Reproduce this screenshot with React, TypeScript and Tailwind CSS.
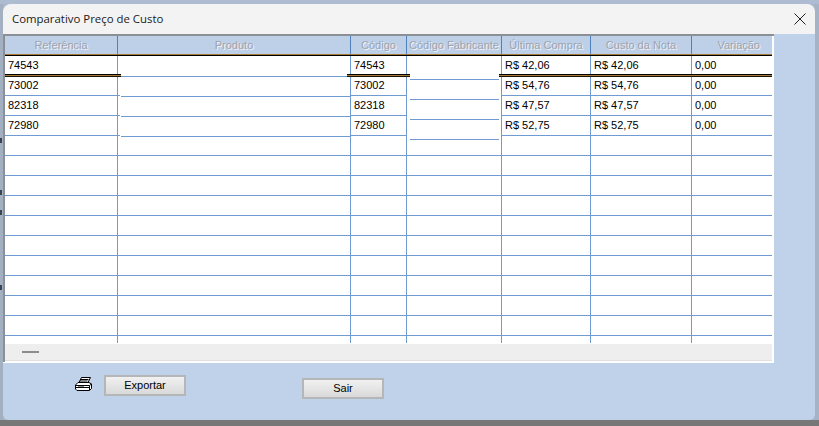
const font = "font-['Liberation_Sans',Arial,sans-serif]";

const rows = [
  { ref: "74543", cod: "74543", ult: "R$ 42,06", cus: "R$ 42,06", vari: "0,00" },
  { ref: "73002", cod: "73002", ult: "R$ 54,76", cus: "R$ 54,76", vari: "0,00" },
  { ref: "82318", cod: "82318", ult: "R$ 47,57", cus: "R$ 47,57", vari: "0,00" },
  { ref: "72980", cod: "72980", ult: "R$ 52,75", cus: "R$ 52,75", vari: "0,00" },
];

const emptyRows = Array.from({ length: 9 }, (_, i) => i);

function HeaderCell({ title, className }: { title: string; className: string }) {
  return (
    <div
      className={`h-[18px] shrink-0 flex items-center border-r border-[#4f82bd] text-[11px] text-[#9da3ad] [text-shadow:1px_1px_0_#eef3fa] ${className}`}
    >
      {title}
    </div>
  );
}

function Bar({ className }: { className: string }) {
  return (
    <div className={`relative z-10 h-[3px] shrink-0 flex flex-col ${className}`}>
      <div className="h-px bg-black" />
      <div className="h-px bg-[#a67a35]" />
      <div className="h-px bg-[#1a1408]" />
    </div>
  );
}

function TextCell({ text, h, className = "" }: { text: string; h: string; className?: string }) {
  return (
    <div className={`shrink-0 flex items-center pl-[3px] border-b border-[#6f9bd2] text-[11px] text-black ${h} ${className}`}>
      {text}
    </div>
  );
}

function Line({ h, className = "" }: { h: string; className?: string }) {
  return <div className={`shrink-0 border-b border-[#6f9bd2] ${h} ${className}`} />;
}

function TextColumn({
  width,
  values,
  barClass,
  cellClass = "",
  last = false,
}: {
  width: string;
  values: string[];
  barClass: string;
  cellClass?: string;
  last?: boolean;
}) {
  return (
    <div className={`flex flex-col shrink-0 ${last ? "" : "border-r border-[#6f9bd2]"} ${width}`}>
      <div className="h-[18px] shrink-0 flex items-center pl-[3px] text-[11px] text-black">{values[0]}</div>
      <Bar className={barClass} />
      <TextCell text={values[1]} h="h-[19px]" className={`pb-[2px] ${cellClass}`} />
      <TextCell text={values[2]} h="h-[20px]" className={cellClass} />
      <TextCell text={values[3]} h="h-[20px]" className={cellClass} />
      {emptyRows.concat([9]).map((i) => (
        <Line key={i} h="h-[20px]" />
      ))}
    </div>
  );
}

function Speck({ className }: { className: string }) {
  return <div className={`h-[5px] w-[2px] bg-[#3c4450] ${className}`} />;
}

export default function App() {
  return (
    <div className={`w-[819px] h-[426px] overflow-hidden flex flex-col bg-[#a9b7cb] ${font}`}>
      <div className="h-1 shrink-0 bg-[#aebcd1]" />
      <div className="flex flex-1 min-h-0">
        <div className="w-[3px] shrink-0 flex flex-col bg-[#a3b0c2]">
          <Speck className="mt-[134px]" />
          <Speck className="mt-[47px]" />
          <Speck className="mt-[15px]" />
          <Speck className="mt-[70px]" />
        </div>
        <div className="w-[812px] h-[416px] shrink-0 flex flex-col rounded-t-lg rounded-b-md overflow-hidden bg-[#c0d2e9]">
          <div className="h-[30px] shrink-0 flex items-center justify-between bg-[#f3f3f3] pl-[9px] pr-[9px]">
            <span className="font-['Open_Sans',sans-serif] text-[11.4px] text-[#1a1a1a]">Comparativo Preço de Custo</span>
            <svg width="12" height="12" viewBox="0 0 12 12" className="text-[#222]">
              <path d="M0.5 0.5 L11.5 11.5 M11.5 0.5 L0.5 11.5" stroke="currentColor" strokeWidth="1" fill="none" />
            </svg>
          </div>
          <div className="w-[771px] h-[328px] shrink-0 flex flex-col border-t-2 border-l-2 border-[#8b8f96] bg-white">
            <div className="flex h-[18px] shrink-0 w-[767px] bg-[#bed0e8]">
              <HeaderCell title="Referência" className="w-[113px] justify-center" />
              <HeaderCell title="Produto" className="w-[233px] justify-center" />
              <HeaderCell title="Código" className="w-[56px] justify-center" />
              <HeaderCell title="Código Fabricante" className="w-[95px] justify-center" />
              <HeaderCell title="Última Compra" className="w-[89px] justify-center" />
              <HeaderCell title="Custo da Nota" className="w-[101px] justify-center" />
              <div className="flex-1 h-[18px] flex items-center justify-end pr-3 text-[11px] text-[#9da3ad] [text-shadow:1px_1px_0_#eef3fa]">
                Variação
              </div>
            </div>
            <div className="w-[767px] shrink-0">
              <div className="h-px bg-[#a67a35]" />
              <div className="h-px bg-black" />
            </div>
            <div className="flex h-[287px] w-[767px] shrink-0">
              <TextColumn
                width="w-[113px]"
                values={rows.map((r) => r.ref)}
                barClass="-mr-[4px]"
                cellClass="-mr-[3px]"
              />
              <div className="flex flex-col shrink-0 w-[233px] border-r border-[#6f9bd2]">
                <Line h="h-[21px]" className="ml-[3px]" />
                <Line h="h-[20px]" className="ml-[3px]" />
                <Line h="h-[20px]" className="ml-[3px]" />
                <Line h="h-[20px]" className="ml-[3px]" />
                {emptyRows.concat([9]).map((i) => (
                  <Line key={i} h={i === 0 ? "h-[19px]" : "h-[20px]"} />
                ))}
              </div>
              <TextColumn width="w-[56px]" values={rows.map((r) => r.cod)} barClass="-mx-[4px]" />
              <div className="flex flex-col shrink-0 w-[95px] border-r border-[#6f9bd2]">
                <Line h="h-[24px]" className="ml-[3px] mr-[2px]" />
                <Line h="h-[20px]" className="ml-[3px] mr-[2px]" />
                <Line h="h-[20px]" className="ml-[3px] mr-[2px]" />
                <Line h="h-[20px]" className="ml-[3px] mr-[2px]" />
                {emptyRows.concat([9]).map((i) => (
                  <Line key={i} h={i === 0 ? "h-[16px]" : "h-[20px]"} />
                ))}
              </div>
              <TextColumn width="w-[89px]" values={rows.map((r) => r.ult)} barClass="-ml-[3px] -mr-px" />
              <TextColumn width="w-[101px]" values={rows.map((r) => r.cus)} barClass="-mr-px" />
              <TextColumn width="w-[80px]" values={rows.map((r) => r.vari)} barClass="" last />
            </div>
            <div className="h-px w-[767px] shrink-0" />
            <div className="h-[16px] w-[767px] shrink-0 flex items-center bg-[#eeeeee] pl-[17px]">
              <div className="w-[17px] h-[2px] bg-[#8c8c8c]" />
            </div>
            <div className="h-px w-[767px] shrink-0 bg-[#e0e0e0]" />
          </div>
          <div className="flex-1 min-h-0 flex items-start border-t border-white w-[771px]">
            <svg width="17" height="15" viewBox="0 0 17 15" className="ml-[72px] mt-[14px] shrink-0">
              <path d="M6.5 0.5 H15.5 L13 5.5 H4 Z" fill="#fff" stroke="#000" />
              <path d="M6 2.5 H13.5 M5 4 H12.5" stroke="#000" />
              <path d="M3 5.5 H14 L16.5 7 V11.5 L14.5 13.5 H2 L0.5 12 V8 Z" fill="#fff" stroke="#000" />
              <path d="M1 8.5 H14.5 L16.5 7 M1 10.5 H14.5 M14.5 8.5 V13" stroke="#000" fill="none" />
              <path d="M3 9.5 H9" stroke="#888" />
            </svg>
            <button className="ml-[12px] mt-[12px] w-[82px] h-[21px] shrink-0 border-2 border-[#b4b6b8] bg-gradient-to-b from-[#f1f1f1] to-[#d9d9d9] text-[11px] text-black flex items-center justify-center">
              Exportar
            </button>
            <button className="ml-[116px] mt-[15px] w-[82px] h-[21px] shrink-0 border-2 border-[#b4b6b8] bg-gradient-to-b from-[#f1f1f1] to-[#d9d9d9] text-[11px] text-black flex items-center justify-center">
              Sair
            </button>
          </div>
        </div>
        <div className="flex-1 bg-[#a6b3c6]" />
      </div>
      <div className="h-[6px] shrink-0 bg-[#777777]" />
    </div>
  );
}
